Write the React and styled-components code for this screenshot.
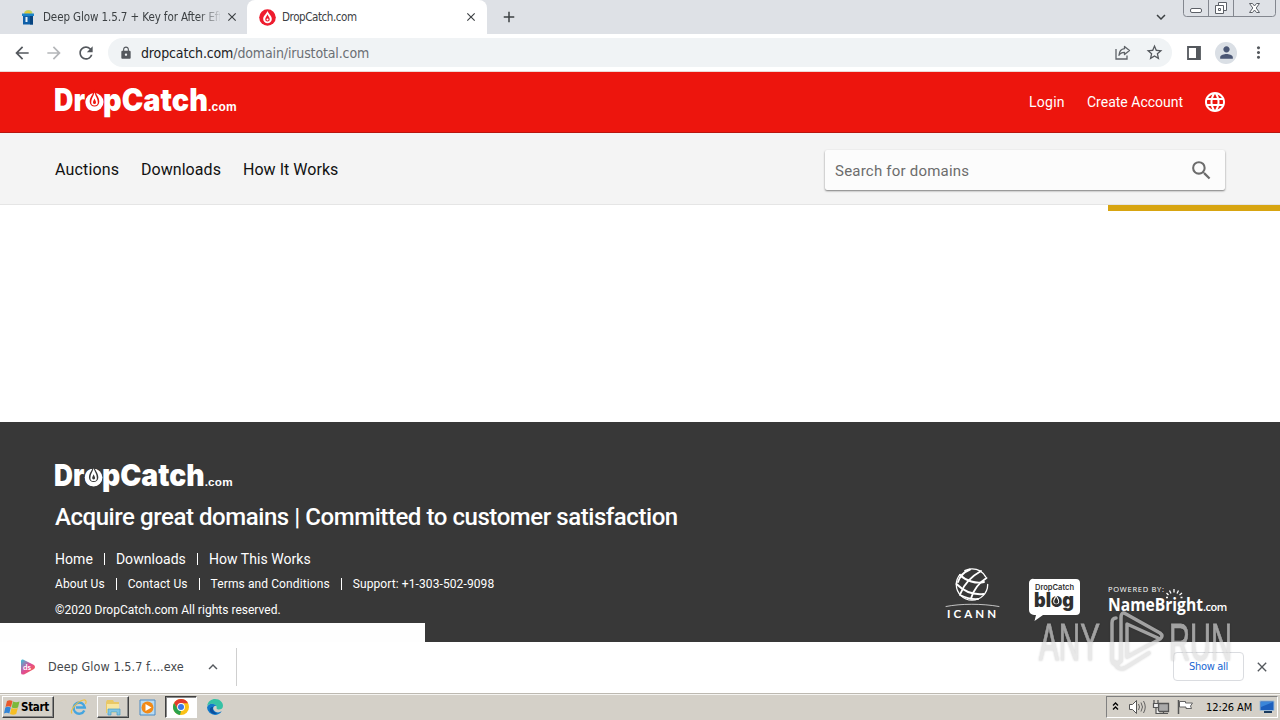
import styled, { createGlobalStyle } from "styled-components";
import {
    MdArrowBack,
    MdArrowForward,
    MdRefresh,
    MdLock,
    MdStarOutline,
    MdMoreVert,
    MdPerson,
    MdLanguage,
    MdSearch,
    MdClose,
    MdAdd,
    MdExpandMore,
    MdExpandLess,
} from "react-icons/md";

const DropCatchLogo = ({ width, bg }) => (
    <Svg width={width} height={(width * 34) / 182} viewBox="0 0 182 34">
        <g fill="#fff" fontFamily="Inter, sans-serif" fontWeight="900">
            <text x="-1" y="26.500" fontSize="31" textLength="31" lengthAdjust="spacingAndGlyphs">Dr</text>
            <text x="30" y="26.500" fontSize="31" textLength="123" lengthAdjust="spacingAndGlyphs">opCatch</text>
            <text x="153" y="26.500" fontFamily="Liberation Sans, sans-serif" fontSize="12" fontWeight="700" letterSpacing=".2">.com</text>
        </g>
        <circle cx="39.500" cy="18" r="9" fill="#fff" />
        <path d="M39.500 5.500c-1 5-4.800 7-4.800 12.300a4.800 4.800 0 0 0 9.600 0c0-5.300-3.800-7.300-4.800-12.300z" fill={bg} />
        <path d="M39.500 8.500c-1 4-3.300 6-3.300 9.800a3.300 3.300 0 0 0 6.600 0c0-3.800-2.300-5.800-3.300-9.800z" fill="#fff" />
        <path d="M39.500 14.500c-.5 1.600-1.500 2.500-1.500 4a1.500 1.500 0 0 0 3 0c0-1.500-1-2.400-1.500-4z" fill={bg} />
    </Svg>
);

const JarIcon = () => (
    <Svg width="16" height="16" viewBox="0 0 16 16">
        <path d="M4 5c0-3 2-4 4.500-4s4 1 4 4z" fill="#b9d36a" />
        <path d="M5.500 4.500c1-2 4-2 5 0" stroke="#eec52b" strokeWidth="1.600" fill="none" />
        <path d="M2 4.500h12v2.500H2z" fill="#1b83c9" />
        <path d="M3 7h10v8.500H3z" fill="#0e5fa8" />
        <path d="M5.500 8h2v5h-2z" fill="#e8f4fb" />
        <path d="M10 7h3v8.500h-3z" fill="#08447f" />
    </Svg>
);

const DropIcon = () => (
    <Svg width="17" height="17" viewBox="0 0 17 17">
        <circle cx="8.500" cy="8.500" r="8.300" fill="#ee1c2e" />
        <path d="M8.500 2C7.500 5 4.200 6.800 4.200 10a4.300 4.300 0 0 0 8.600 0c0-3.200-3.300-5-4.300-8z" fill="#fff" />
        <path d="M8.500 5.200C8 7.200 6.200 8.300 6.200 10.200a2.300 2.300 0 0 0 4.600 0c0-1.900-1.800-3-2.300-5z" fill="#ee1c2e" />
        <circle cx="8.500" cy="10.500" r="1" fill="#fff" />
    </Svg>
);

const ShareIcon = () => (
    <Svg width="16" height="15" viewBox="0 0 16 15" fill="none" stroke="#5f6368" strokeWidth="1.300">
        <path d="M1 4v10h11v-3.500" />
        <path d="M9.500 1.500 14.500 5.500 9.500 9.500V7.300C6.800 7.300 5 8.300 4 10.300 4.300 6.500 6.500 4 9.500 3.700z" strokeLinejoin="round" />
    </Svg>
);

const PanelIcon = () => (
    <Svg width="14" height="14" viewBox="0 0 14 14">
        <path d="M1 1h12v12H1z" fill="none" stroke="#54585d" strokeWidth="1.800" />
        <path d="M9 1h4v12H9z" fill="#54585d" />
    </Svg>
);

const WindowButtons = () => (
    <Svg width="94" height="17" viewBox="0 0 94 17" fill="none" stroke="#83878f">
        <path d="M.5 0v13.500a3 3 0 0 0 3 3h86a3 3 0 0 0 3-3V0M25.500 0v16M50.500 0v16" />
        <rect x="7.500" y="8.500" width="11" height="4" rx="1.500" fill="#fff" stroke="#5c6067" />
        <path d="M35.500 2.500h8v8h-8z" fill="#fff" stroke="#5c6067" />
        <path d="M32.500 5.500h8v8h-8z" fill="#fff" stroke="#5c6067" />
        <path d="M35.500 8.500h2v2h-2z" stroke="#5c6067" />
        <path d="M66.500 3.500h3l2 2.500 2-2.500h3l-3.300 4.500 3.300 4.500h-3l-2-2.500-2 2.500h-3L69.800 8z" fill="#fff" stroke="#5c6067" />
    </Svg>
);

const IcannLogo = () => (
    <Svg width="58" height="54" viewBox="0 0 58 54">
        <g fill="none" stroke="#fff" strokeLinecap="round">
            <circle cx="27" cy="16.500" r="15.700" strokeWidth="1.300" strokeDasharray="60 6 24 9" />
            <path d="M15 7c6 6 16 9 24 7M11.500 16c7 7 17 11 27 10M15 27c6 3 12 4.500 18 4" strokeWidth="1.900" />
            <path d="M36 3C27 8 19 16 15.500 25.500M41.500 10c-8 5-13 12-15.500 20.500M25 1.500C19 4 14.500 9 13 14" strokeWidth="1.900" />
            <path d="M1 38.500c15-3 36-3 53 0" strokeWidth=".7" />
        </g>
        <text x="2" y="49.500" fill="#fff" fontFamily="Lato, sans-serif" fontWeight="700" fontSize="11.500" textLength="49">ICANN</text>
    </Svg>
);

const BlogLogo = () => (
    <Svg width="52" height="44" viewBox="0 0 52 44">
        <path d="M5 1h42a4 4 0 0 1 4 4v28a4 4 0 0 1-4 4H14L5.500 43l1.500-6H5a5 5 0 0 1-5-5V5a4 4 0 0 1 5-4z" fill="#fff" />
        <g fill="#303030" fontFamily="Inter, sans-serif">
            <text x="6" y="11.500" fontSize="7.500" fontWeight="600" textLength="39" lengthAdjust="spacingAndGlyphs">DropCatch</text>
            <text x="5" y="29" fontSize="20" fontWeight="900" textLength="40" lengthAdjust="spacingAndGlyphs">blog</text>
        </g>
        <circle cx="27.200" cy="23.500" r="4.500" fill="#303030" />
        <path d="M27.200 16.500c-1 2.800-3 4-3 6.800a3 3 0 0 0 6 0c0-2.800-2-4-3-6.800z" fill="#fff" />
        <path d="M27.200 18.500c-.6 2.300-2 3.200-2 5.200a2 2 0 0 0 4 0c0-2-1.400-2.900-2-5.200z" fill="#303030" />
    </Svg>
);

const NameBrightLogo = () => (
    <Svg width="120" height="34" viewBox="0 0 120 34">
        <g fill="#fff">
            <text x="0" y="7.500" fontFamily="Open Sans, sans-serif" fontSize="7.500" fontWeight="400" textLength="56">POWERED BY:</text>
            <text x="0" y="26.500" fontFamily="Open Sans, sans-serif" fontSize="18.500" fontWeight="700" textLength="95" lengthAdjust="spacingAndGlyphs">NameBright</text>
            <text x="95" y="26.500" fontFamily="Open Sans, sans-serif" fontSize="11" fontWeight="600" letterSpacing="-.5">.com</text>
        </g>
        <path d="M60.500 11l-2-2M63 9.500l-1.500-3M66 8.500V5M69 9.500l1.500-3M71.500 11l2.500-2M60 13.500h-2M72.500 13.500h2" stroke="#fff" strokeWidth="1.300" fill="none" />
    </Svg>
);

const InstallerIcon = () => (
    <Svg width="15" height="16" viewBox="0 0 15 16">
        <defs>
            <linearGradient id="installer" x1="0" y1="0" x2="1" y2="1">
                <stop offset="0" stopColor="#35c5dc" />
                <stop offset=".5" stopColor="#e14b94" />
                <stop offset="1" stopColor="#fa6b35" />
            </linearGradient>
        </defs>
        <path d="M0 2Q0 0 2 .5L13 6q2 2 0 4L3 15.500Q0 16 0 14z" fill="url(#installer)" />
        <text x="2" y="11" fill="#fff" fontSize="8" fontWeight="700" fontFamily="Lato, sans-serif">ds</text>
    </Svg>
);

const WindowsFlag = () => (
    <Svg width="16" height="15" viewBox="0 0 16 15">
        <path d="M3 1q2.500-1.500 5.500 0L7 7q-2.500-1.500-5.500 0z" fill="#e9592c" />
        <path d="M9 1.500q3 1.500 6.500 0L14 7.500q-3 1.300-6.300 0z" fill="#7cb93b" />
        <path d="M1.300 7.600q2.500-1.500 5.500 0L5.300 13.600q-2.500-1.500-5.300 0z" fill="#3485d6" />
        <path d="M7.500 8.100q3 1.300 6.300 0L12.200 14q-3 1.300-6.200 0z" fill="#f6be23" />
    </Svg>
);

const IeIcon = () => (
    <Svg width="18" height="18" viewBox="0 0 18 18" fill="none">
        <path d="M14.300 12.500A5.600 5.600 0 1 1 14.800 9.500H6" stroke="#45a5df" strokeWidth="2.400" />
        <path d="M2 15.500C-.5 13 7 3 13.500 2c3-.5 3 2 2 4" stroke="#edc045" strokeWidth="1.200" />
    </Svg>
);

const FolderIcon = () => (
    <Svg width="18" height="17" viewBox="0 0 18 17">
        <path d="M2 3l1-2h6l1 2h5v11H2z" fill="#e9c866" />
        <path d="M3 5h12v9H3z" fill="#f8e6a0" />
        <path d="M4 16v-6h12v6h-3v-3H7v3z" fill="#7fc4e4" stroke="#4b9dc5" strokeWidth=".7" />
    </Svg>
);

const MediaIcon = () => (
    <Svg width="17" height="17" viewBox="0 0 17 17">
        <path d="M1 1h15v15H1z" fill="#b9dbf2" stroke="#4a8ac4" />
        <circle cx="8.500" cy="8.500" r="6" fill="#f28a17" />
        <path d="M6.500 5l6 3.500-6 3.500z" fill="#fff" />
    </Svg>
);

const ChromeIcon = () => (
    <Svg width="16" height="16" viewBox="0 0 16 16">
        <circle cx="8" cy="8" r="8" fill="#fbc116" />
        <path d="M1.100 4A8 8 0 0 1 15 4.200H8L4.700 10z" fill="#e33b2e" />
        <path d="M1.100 4 4.600 10 8 12l-1 4A8 8 0 0 1 1.100 4z" fill="#2ba24c" />
        <circle cx="8" cy="8" r="3.900" fill="#fff" />
        <circle cx="8" cy="8" r="3" fill="#3b78e7" />
    </Svg>
);

const EdgeIcon = () => (
    <Svg width="16" height="16" viewBox="0 0 16 16">
        <path d="M.1 7C1 2 4.500 0 8 0c5 0 8 3.500 8 6.800 0 3-2.500 4-5 3.700-2-.2-1-1.500-1.500-3C8.500 4.500 3 3.500.1 7z" fill="#35c1a5" />
        <path d="M0 8.500C1 4 7 3.500 9.300 7 6 6.500 5.500 9.500 7 11.500c1.800 2.300 5 2.500 7.800.8C13 15 10.500 16 8 16a8 8 0 0 1-8-7.500z" fill="#1179c9" />
        <path d="M6.300 8c-1.300 2 .2 6 4 6-2.500 2-7.300.5-7.500-3C2.700 9 4 7.500 6.300 8z" fill="#0b4f9e" />
    </Svg>
);

const TrayIcons = () => (
    <Svg width="87" height="18" viewBox="0 0 87 18" fill="none" stroke="#555">
        <path d="M2 7.500l2.500-2.500L7 7.500M2 11.500l2.500-2.500L7 11.500" stroke="#000" strokeWidth="1.300" />
        <path d="M18.500 6.500h3l4-4v13l-4-4h-3z" fill="#fff" />
        <path d="M27.500 6q2 3 0 6M30 4.500q3 4.500 0 9M32.500 3q3.500 6 0 12" strokeWidth=".9" />
        <path d="M47.500 5.500h10v8h-10z" fill="#aaa" strokeWidth="1.300" />
        <path d="M48 15.500h9M52.500 13v2M43 2v4M47 2v4M42.500 5.500h5v4h-5zM45 10v5.500h4" fill="#eee" strokeWidth="1.200" />
        <path d="M67.500 2v14" strokeWidth="1.500" />
        <path d="M68.500 3.500h6v1.500h7l-2 3 1 2.500h-5.500V9h-6.500z" fill="#fff" strokeWidth=".9" />
    </Svg>
);

const DesktopIcon = () => (
    <Svg width="16" height="14" viewBox="0 0 16 14">
        <path d="M1 1h14v9.500H1z" fill="#1d5fbd" stroke="#9bbad6" />
        <path d="M2 2h12L2 7z" fill="#3b86d9" />
        <path d="M5 11h8v2H5z" fill="#1a3a5e" />
    </Svg>
);

const AnyRunMark = () => (
    <Svg width="200" height="66" viewBox="0 0 200 66">
        <g fill="#dcdcdc" stroke="#dcdcdc" strokeWidth=".8" fontFamily="Liberation Sans, sans-serif">
            <text x="4" y="51.500" fontSize="52" textLength="61" lengthAdjust="spacingAndGlyphs">ANY</text>
            <text x="134" y="51.500" fontSize="52" textLength="63" lengthAdjust="spacingAndGlyphs">RUN</text>
        </g>
        <g fill="none" stroke="#dcdcdc" strokeWidth="3.500" strokeLinejoin="round" strokeLinecap="round">
            <path d="M81 10q-4 0-4 5v36q0 6 5 5l4-3V10q0-7 5-4l34 19q4 3 0 6L92 49V16l31 14" />
            <path d="M80 54q2 9 10 6l24-15" />
        </g>
    </Svg>
);

const App = () => (
    <>
        <GlobalStyle />
        <Screen>
            <TabStrip>
                <Tab>
                    <JarIcon />
                    <TabTitle $fade $width="177px" $spacing="-0.1px">Deep Glow 1.5.7 + Key for After Eff</TabTitle>
                    <MdClose size={14} />
                </Tab>
                <Tab $active>
                    <DropIcon />
                    <TabTitle $width="177px" $spacing="-0.42px">DropCatch.com</TabTitle>
                    <MdClose size={14} />
                </Tab>
                <NewTab>
                    <MdAdd size={18} />
                </NewTab>
                <WindowArea>
                    <MdExpandMore size={18} />
                    <WindowButtons />
                </WindowArea>
            </TabStrip>

            <Toolbar>
                <ToolIcons>
                    <MdArrowBack size={20} color="#54585d" />
                    <MdArrowForward size={20} color="#b4b6b9" />
                    <MdRefresh size={20} color="#54585d" />
                </ToolIcons>
                <AddressBar>
                    <MdLock size={14} color="#54585d" />
                    <Url>
                        dropcatch.com<UrlPath>/domain/irustotal.com</UrlPath>
                    </Url>
                    <ShareIcon />
                    <MdStarOutline size={19} color="#54585d" />
                </AddressBar>
                <ToolEnd>
                    <PanelIcon />
                    <Avatar>
                        <MdPerson size={19} color="#4a5674" />
                    </Avatar>
                    <MdMoreVert size={19} color="#54585d" />
                </ToolEnd>
            </Toolbar>

            <Header>
                <DropCatchLogo width={182} bg="#ed150d" />
                <Account>
                    <Link $size="14px" $width="36px" $spacing="0.25px">Login</Link>
                    <Link $size="14px" $width="96px" $spacing="0">Create Account</Link>
                    <MdLanguage size={24} />
                </Account>
            </Header>

            <Nav>
                <NavLinks>
                    <Link $size="16px" $width="64px" $spacing="0.15px">Auctions</Link>
                    <Link $size="16px" $width="80px" $spacing="0.05px">Downloads</Link>
                    <Link $size="16px" $spacing="0.03px">How It Works</Link>
                </NavLinks>
                <Search>
                    <Placeholder>Search for domains</Placeholder>
                    <MdSearch size={25} />
                </Search>
            </Nav>

            <Content>
                <Progress />
            </Content>

            <Footer>
                <DropCatchLogo width={178} bg="#383838" />
                <Tagline>Acquire great domains | Committed to customer satisfaction</Tagline>
                <FooterRow $size="14px" $height="24px" $spacing="0.05px">
                    <span>Home</span>
                    <Divider />
                    <span>Downloads</span>
                    <Divider />
                    <span>How This Works</span>
                </FooterRow>
                <FooterRow $size="12px" $height="26px" $spacing="0.1px">
                    <span>About Us</span>
                    <Divider />
                    <span>Contact Us</span>
                    <Divider />
                    <span>Terms and Conditions</span>
                    <Divider />
                    <span>Support: +1-303-502-9098</span>
                </FooterRow>
                <FooterRow $size="12px" $height="26px" $spacing="0.02px">©2020 DropCatch.com All rights reserved.</FooterRow>
                <Partners>
                    <IcannLogo />
                    <BlogLogo />
                    <NameBrightLogo />
                </Partners>
                <StatusBubble />
            </Footer>

            <DownloadBar>
                <Download>
                    <InstallerIcon />
                    <FileName>Deep Glow 1.5.7 f....exe</FileName>
                    <MdExpandLess size={18} />
                </Download>
                <DownloadEnd>
                    <ShowAll>Show all</ShowAll>
                    <MdClose size={16} />
                </DownloadEnd>
            </DownloadBar>

            <Taskbar>
                <StartButton>
                    <WindowsFlag />
                    Start
                </StartButton>
                <TaskButton><IeIcon /></TaskButton>
                <TaskButton $raised><FolderIcon /></TaskButton>
                <TaskButton><MediaIcon /></TaskButton>
                <TaskButton $pressed><ChromeIcon /></TaskButton>
                <TaskButton><EdgeIcon /></TaskButton>
                <Tray>
                    <TrayIcons />
                    <Clock>12:26 AM</Clock>
                    <DesktopIcon />
                </Tray>
            </Taskbar>

            <Watermark>
                <AnyRunMark />
            </Watermark>
        </Screen>
    </>
);

export default App;

// ================== STYLES ==================
const GlobalStyle = createGlobalStyle`
    * {
        box-sizing: border-box;
    }

    body {
        margin: 0;
        overflow: hidden;
    }

    svg {
        flex-shrink: 0;
    }
`;

const uiFont = `"DejaVu Sans Condensed", "DejaVu Sans", sans-serif`;

const Svg = styled.svg`
    display: block;
    overflow: visible;
`;

const Screen = styled.div`
    position: relative;
    width: 1280px;
    height: 720px;
    display: flex;
    flex-direction: column;
    overflow: hidden;
    background: #fff;
    font-family: Roboto, sans-serif;
    white-space: nowrap;
`;

const TabStrip = styled.div`
    display: flex;
    height: 34px;
    background: #dee1e6;
    color: #3c4043;
`;

const Tab = styled.div`
    display: flex;
    align-items: center;
    width: ${(p) => (p.$active ? "240px" : "247px")};
    padding-left: ${(p) => (p.$active ? "12px" : "20px")};
    background: ${(p) => (p.$active ? "#fff" : "transparent")};
    border-radius: 8px 8px 0 0;
`;

const TabTitle = styled.span`
    width: ${(p) => p.$width};
    margin: 0 5px 0 ${(p) => (p.$fade ? "7px" : "6px")};
    overflow: hidden;
    font: 11.5px ${uiFont};
    letter-spacing: ${(p) => p.$spacing};
    mask-image: ${(p) => (p.$fade ? "linear-gradient(90deg, #000 155px, transparent 180px)" : "none")};
`;

const NewTab = styled.div`
    display: flex;
    align-items: center;
    padding-left: 13px;
`;

const WindowArea = styled.div`
    display: flex;
    gap: 13px;
    margin-left: auto;
    padding-right: 3px;

    > :first-child {
        margin-top: 8px;
    }
`;

const Toolbar = styled.div`
    display: flex;
    align-items: center;
    height: 38px;
    border-bottom: 1px solid #ecd9d4;
`;

const ToolIcons = styled.div`
    display: flex;
    gap: 12px;
    width: 108px;
    padding-left: 12px;
`;

const AddressBar = styled.div`
    display: flex;
    align-items: center;
    width: 1064px;
    height: 29px;
    padding: 0 8px 0 11px;
    border-radius: 15px;
    background: #f0f3f5;
`;

const Url = styled.div`
    flex: 1;
    margin-left: 8px;
    color: #202124;
    font: 14px ${uiFont};
    letter-spacing: -0.13px;

    & + svg {
        margin-right: 14px;
    }
`;

const UrlPath = styled.span`
    color: #6b6f74;
`;

const ToolEnd = styled.div`
    display: flex;
    align-items: center;
    gap: 14px;
    padding-left: 15px;

    > :last-child {
        margin-left: -2px;
    }
`;

const Avatar = styled.div`
    display: grid;
    place-items: center;
    width: 22px;
    height: 22px;
    border-radius: 50%;
    background: #dadfe5;
`;

const Header = styled.header`
    display: flex;
    justify-content: space-between;
    height: 61px;
    padding: 12px 53px 0 55px;
    background: #ed150d;
    border-bottom: 1px solid #b8150f;
    color: #fff;
`;

const Account = styled.div`
    display: flex;
    align-items: center;
    gap: 22px;
    height: 36px;

    > svg {
        margin-left: -2px;
    }
`;

const Link = styled.a`
    width: ${(p) => p.$width || "auto"};
    font-size: ${(p) => p.$size};
    letter-spacing: ${(p) => p.$spacing};
`;

const Nav = styled.nav`
    display: flex;
    justify-content: space-between;
    height: 72px;
    padding: 17px 55px 0;
    background: #f4f4f4;
    border-bottom: 1px solid #e5e5e5;
    color: #111;
`;

const NavLinks = styled.div`
    display: flex;
    align-items: center;
    gap: 22px;
    height: 38px;
`;

const Search = styled.div`
    display: flex;
    align-items: center;
    justify-content: space-between;
    width: 400px;
    height: 40px;
    padding: 0 11px 0 10px;
    border-radius: 2px;
    background: #fcfcfc;
    box-shadow: 0 1px 2px rgba(0, 0, 0, 0.5);
    color: #6c6c6c;
`;

const Placeholder = styled.span`
    padding-top: 2px;
    font-size: 15px;
    letter-spacing: 0.22px;
`;

const Content = styled.main`
    height: 217px;
`;

const Progress = styled.div`
    width: 172px;
    height: 6px;
    margin-left: auto;
    background: #d8a511;
`;

const Footer = styled.footer`
    position: relative;
    height: 220px;
    padding: 38px 55px 0;
    background: #383838;
    color: #fff;
`;

const Tagline = styled.h2`
    margin: 6px 0 0;
    font-size: 24px;
    font-weight: 500;
    line-height: 36px;
    letter-spacing: -0.44px;
`;

const FooterRow = styled.div`
    display: flex;
    align-items: center;
    height: ${(p) => p.$height};
    font-size: ${(p) => p.$size};
    letter-spacing: ${(p) => p.$spacing};

    ${Tagline} + & {
        margin-top: 12px;
    }
`;

const Divider = styled.i`
    width: 1px;
    height: 12px;
    margin: 0 11px;
    background: #fff;
`;

const Partners = styled.div`
    position: absolute;
    right: 52px;
    top: 146px;
    display: flex;
    gap: 27px;

    > :first-child {
        margin-right: -1px;
    }

    > :nth-child(2) {
        margin-top: 10px;
    }

    > :nth-child(3) {
        margin-top: 16px;
    }
`;

const StatusBubble = styled.div`
    position: absolute;
    left: 0;
    bottom: 0;
    width: 425px;
    height: 19px;
    background: #fefefe;
`;

const DownloadBar = styled.div`
    display: flex;
    justify-content: space-between;
    height: 51px;
    padding-top: 6px;
    background: #fff;
    color: #54585d;
`;

const Download = styled.div`
    display: flex;
    align-items: center;
    width: 237px;
    height: 38px;
    padding-left: 21px;
    border-right: 1px solid #cfcfcf;
`;

const FileName = styled.span`
    width: 148px;
    margin: -2px 8px 0 12px;
    color: #45484c;
    font: 12.5px ${uiFont};
    letter-spacing: 0.07px;
`;

const DownloadEnd = styled.div`
    display: flex;
    align-items: center;
    gap: 10px;
    height: 37px;
    padding-right: 10px;
`;

const ShowAll = styled.div`
    display: grid;
    place-items: center;
    width: 71px;
    height: 29px;
    border: 1px solid #dadce0;
    border-radius: 4px;
    color: #1a66d2;
    font: 11px ${uiFont};
    letter-spacing: -0.3px;
`;

const Taskbar = styled.div`
    display: flex;
    height: 27px;
    padding: 2px 2px 1px;
    background: #d4d0c8;
    border-top: 1px solid #bdb9b1;
    box-shadow: inset 0 1px #f5f4f1;
    color: #000;
    font: 11px ${uiFont};
`;

const StartButton = styled.div`
    display: flex;
    align-items: center;
    gap: 1px;
    width: 52px;
    height: 22px;
    margin-right: 9px;
    padding-left: 1px;
    border: 1px solid;
    border-color: #fff #404040 #404040 #fff;
    box-shadow: inset -1px -1px #888;
    font-size: 11.5px;
    font-weight: 700;
    letter-spacing: -0.3px;
`;

const TaskButton = styled.div`
    display: grid;
    place-items: center;
    width: 32px;
    height: 22px;
    margin-right: 2px;
    border: 1px solid;
    border-color: ${(p) => (p.$raised ? "#fff #404040 #404040 #fff" : p.$pressed ? "#404040 #fff #fff #404040" : "transparent")};
    background: ${(p) => (p.$pressed ? "#fff" : "transparent")};
    box-shadow: ${(p) => (p.$raised ? "inset -1px -1px #888" : p.$pressed ? "inset 1px 1px #888" : "none")};
`;

const Tray = styled.div`
    display: flex;
    align-items: center;
    width: 172px;
    height: 22px;
    margin-left: auto;
    padding-left: 4px;
    border: 1px solid;
    border-color: #808080 #fff #fff #808080;
`;

const Clock = styled.span`
    width: 52px;
    margin: 0 1px 0 8px;
    letter-spacing: -0.1px;
`;

const Watermark = styled.div`
    position: absolute;
    left: 1035px;
    top: 608px;
    opacity: 0.65;
    filter: drop-shadow(0 0 1px rgba(0, 0, 0, 0.25));
`;
